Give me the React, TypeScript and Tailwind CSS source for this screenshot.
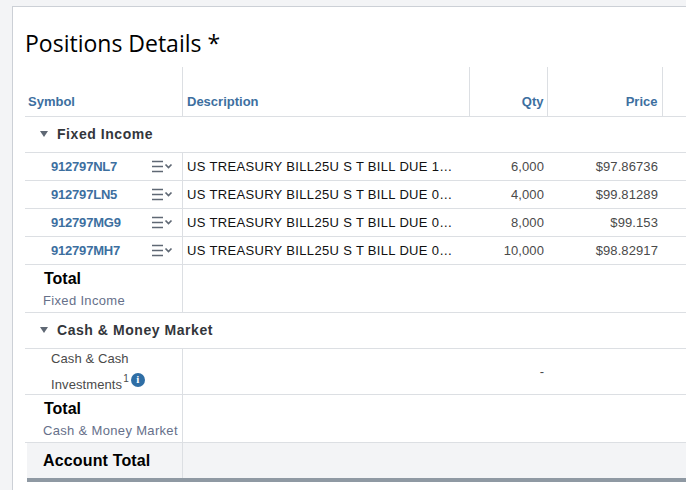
import React from 'react';

const rows = [
  { symbol: '912797NL7', desc: 'US TREASURY BILL25U S T BILL DUE 10/02/25', qty: '6,000', price: '$97.86736' },
  { symbol: '912797LN5', desc: 'US TREASURY BILL25U S T BILL DUE 01/22/26', qty: '4,000', price: '$99.81289' },
  { symbol: '912797MG9', desc: 'US TREASURY BILL25U S T BILL DUE 07/08/25', qty: '8,000', price: '$99.153' },
  { symbol: '912797MH7', desc: 'US TREASURY BILL25U S T BILL DUE 09/04/25', qty: '10,000', price: '$98.82917' },
];

const MenuIcon = () => (
  <svg width="21" height="13" viewBox="0 0 21 13" className="shrink-0">
    <path d="M0 1.5h11M0 6.5h11M0 11.5h11" stroke="#5f6874" strokeWidth="1.6" fill="none" />
    <path d="M13.5 4.5l3 3 3-3" stroke="#5f6874" strokeWidth="1.7" fill="none" />
  </svg>
);

const GroupRow = ({ label }: { label: string }) => (
  <tr className="h-[36px] border-b border-[#dcdfe3]">
    <td colSpan={5} className="pl-[15px]">
      <div className="flex items-center gap-[9px]">
        <span className="h-0 w-0 border-x-[4px] border-t-[6px] border-x-transparent border-t-[#5f6874]" />
        <span className="text-[14px] font-bold tracking-[0.55px] text-[#33363b]">{label}</span>
      </div>
    </td>
  </tr>
);

const TotalRow = ({ label }: { label: string }) => (
  <tr className="h-[48px] border-b border-[#dcdfe3]">
    <td className="border-r border-[#dcdfe3] pt-[2px] pl-[19px]">
      <div className="text-[16px] leading-[22px] font-bold text-black">Total</div>
      <div className="-ml-[1px] pt-[2px] text-[13px] leading-[18px] tracking-[0.33px] whitespace-nowrap text-[#66708a]">{label}</div>
    </td>
    <td colSpan={4} />
  </tr>
);

export default function App() {
  return (
    <div className="h-[490px] w-[686px] overflow-hidden bg-[#f3f4f6] pt-[6px] pl-[12px] font-['Liberation_Sans',Arial,sans-serif]">
      <div className="h-[484px] w-[700px] border-t border-l border-[#ccd0d6] bg-white pl-[12px]">
        <h1 className="pt-[22px] pb-[9px] font-['Open_Sans',sans-serif] text-[23px] leading-[29px] text-black">Positions Details *</h1>
        <table className="w-[680px] table-fixed border-collapse text-[13px]">
          <colgroup>
            <col className="w-[157px]" />
            <col className="w-[287px]" />
            <col className="w-[78px]" />
            <col className="w-[115px]" />
            <col />
          </colgroup>
          <thead>
            <tr className="h-[49px] border-b border-[#dcdfe3] text-[#3d6f9f]">
              <th className="border-r border-[#dcdfe3] pt-[20px] pl-[3px] text-left font-bold">Symbol</th>
              <th className="border-r border-[#dcdfe3] pt-[20px] pl-[4.5px] text-left font-bold">Description</th>
              <th className="border-r border-[#dcdfe3] pt-[20px] pr-[3px] text-right font-bold">Qty</th>
              <th className="border-r border-[#dcdfe3] pt-[20px] pr-[4px] text-right font-bold">Price</th>
              <th />
            </tr>
          </thead>
          <tbody>
            <GroupRow label="Fixed Income" />
            {rows.map((r) => (
              <tr key={r.symbol} className="h-[28px] border-b border-[#dcdfe3]">
                <td className="border-r border-[#dcdfe3] pt-[1px] pl-[26px]">
                  <div className="flex items-center justify-between pr-[9px]">
                    <span className="font-bold tracking-[-0.2px] text-[#3d6f9f]">{r.symbol}</span>
                    <MenuIcon />
                  </div>
                </td>
                <td className="pt-[1px] pr-[15px] pl-[4.5px]">
                  <div className="truncate tracking-[0.33px] text-[#111]">{r.desc}</div>
                </td>
                <td className="pt-[1px] pr-[3px] text-right tracking-[0.1px] text-[#4a4a4a]">{r.qty}</td>
                <td className="pt-[1px] pr-[4px] text-right tracking-[0.1px] text-[#4a4a4a]">{r.price}</td>
                <td />
              </tr>
            ))}
            <TotalRow label="Fixed Income" />
            <GroupRow label="Cash &amp; Money Market" />
            <tr className="h-[46px] border-b border-[#dcdfe3]">
              <td className="border-r border-[#dcdfe3] pl-[26px] tracking-[0.1px] text-[#4a4a4a]">
                <div className="leading-[20px]">Cash &amp; Cash</div>
                <div className="flex items-start pt-[5px] leading-[20px]">
                  <span className="translate-y-[1px]">Investments</span>
                  <sup className="pt-[5px] pl-[1px] text-[10px] leading-[10px]">1</sup>
                  <span className="mt-[-1px] ml-[2px] flex h-[14px] w-[14px] items-center justify-center rounded-full bg-[#2f6ea5] font-['Liberation_Serif',serif] text-[11px] leading-none font-bold text-white">i</span>
                </div>
              </td>
              <td />
              <td className="pt-[2px] pr-[3px] text-right text-[#4a4a4a]">-</td>
              <td colSpan={2} />
            </tr>
            <TotalRow label="Cash &amp; Money Market" />
          </tbody>
        </table>
        <div className="ml-[2px] flex h-[39px] w-[680px] border-b-[4px] border-[#8f99a3] bg-[#f3f4f6]">
          <div className="flex w-[156px] shrink-0 items-center border-r border-[#dcdfe3] pt-[1px] pl-[16px] text-[16px] font-bold tracking-[0.15px] text-black">Account Total</div>
        </div>
      </div>
    </div>
  );
}
